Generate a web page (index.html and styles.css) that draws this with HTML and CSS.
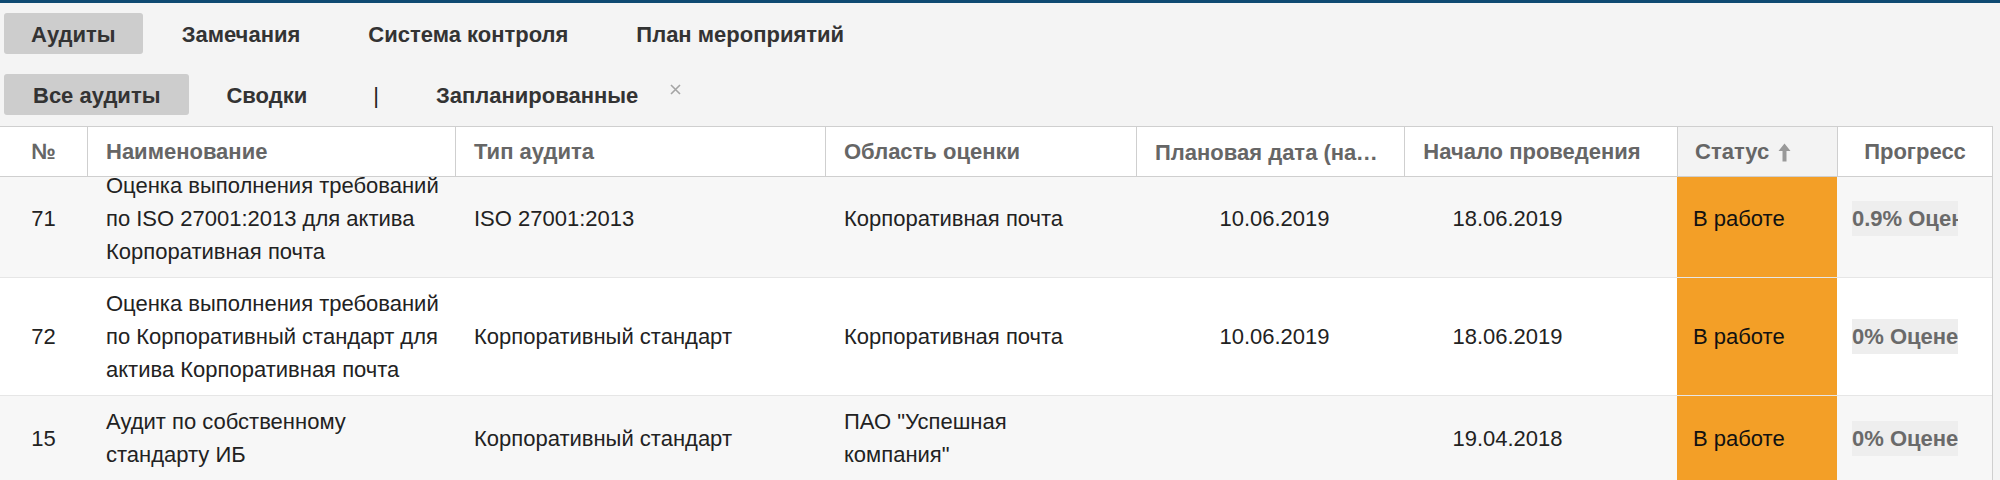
FILE: index.html
```html
<!DOCTYPE html>
<html lang="ru">
<head>
<meta charset="utf-8">
<title>Аудиты</title>
<link rel="stylesheet" href="styles.css">
</head>
<body>
<div class="topbar"></div>
<nav class="tabs tabs-main">
  <span class="tab active">Аудиты</span>
  <span class="tab">Замечания</span>
  <span class="tab">Система контроля</span>
  <span class="tab">План мероприятий</span>
</nav>
<nav class="tabs tabs-sub">
  <span class="tab active">Все аудиты</span>
  <span class="tab">Сводки</span>
  <span class="tab sep">|</span>
  <span class="tab closable">Запланированные<svg class="close" width="11" height="11" viewBox="0 0 11 11"><path d="M1 1 L10 10 M10 1 L1 10" stroke="#a4a4a4" stroke-width="1.6" fill="none"/></svg></span>
</nav>
<div class="table">
  <div class="thead">
    <div class="th th-center">№</div>
    <div class="th">Наименование</div>
    <div class="th">Тип аудита</div>
    <div class="th">Область оценки</div>
    <div class="th th-trunc">Плановая дата (начало)</div>
    <div class="th th-center th-start">Начало проведения</div>
    <div class="th th-sorted">Статус
      <svg class="sort-arrow" width="13" height="19" viewBox="0 0 13 19"><path d="M6.5 0.5 L12.5 8 H8.5 V18.5 H4.5 V8 H0.5 Z" fill="#999"/></svg>
    </div>
    <div class="th th-center">Прогресс</div>
  </div>
  <div class="tbody">
    <div class="rows">
      <div class="tr odd">
        <div class="td td-center">71</div>
        <div class="td td-name">Оценка выполнения требований по ISO 27001:2013 для актива Корпоративная почта</div>
        <div class="td">ISO 27001:2013</div>
        <div class="td td-area">Корпоративная почта</div>
        <div class="td td-date1">10.06.2019</div>
        <div class="td td-date2">18.06.2019</div>
        <div class="td td-status">В работе</div>
        <div class="td td-progress"><span class="progress">0.9% Оценено</span></div>
      </div>
      <div class="tr">
        <div class="td td-center">72</div>
        <div class="td td-name">Оценка выполнения требований по Корпоративный стандарт для актива Корпоративная почта</div>
        <div class="td">Корпоративный стандарт</div>
        <div class="td td-area">Корпоративная почта</div>
        <div class="td td-date1">10.06.2019</div>
        <div class="td td-date2">18.06.2019</div>
        <div class="td td-status">В работе</div>
        <div class="td td-progress"><span class="progress">0% Оценено</span></div>
      </div>
      <div class="tr odd">
        <div class="td td-center">15</div>
        <div class="td td-name">Аудит по собственному стандарту ИБ</div>
        <div class="td">Корпоративный стандарт</div>
        <div class="td td-area">ПАО "Успешная компания"</div>
        <div class="td td-date1"></div>
        <div class="td td-date2">19.04.2018</div>
        <div class="td td-status">В работе</div>
        <div class="td td-progress"><span class="progress">0% Оценено</span></div>
      </div>
      <div class="tr tr-tail">
        <div class="td td-center"></div>
        <div class="td td-name"></div>
        <div class="td"></div>
        <div class="td td-area"></div>
        <div class="td td-date1"></div>
        <div class="td td-date2"></div>
        <div class="td td-status"></div>
        <div class="td td-progress"></div>
      </div>
    </div>
  </div>
</div>
</body>
</html>
```
FILE: styles.css
```css
html, body {
  margin: 0;
  padding: 0;
}
body {
  width: 2000px;
  height: 480px;
  overflow: hidden;
  background: #f4f4f4;
  font-family: "Liberation Sans", Arial, sans-serif;
  color: #222;
}
.topbar {
  height: 3px;
  background: #0f4a72;
}
.tabs {
  display: flex;
  align-items: center;
  gap: 10px;
  padding-left: 4px;
}
.tabs-main {
  margin-top: 10px;
}
.tabs-sub {
  margin-top: 20px;
  gap: 8px;
}
.tab {
  height: 41px;
  padding: 2px 29px 0;
  display: flex;
  align-items: center;
  font-size: 22px;
  font-weight: bold;
  color: #333;
  border-radius: 3px;
  box-sizing: border-box;
  white-space: nowrap;
}
.tab.active {
  background: #cdcdcd;
}
.tabs-main .tab.active {
  padding-left: 27px;
  padding-right: 27px;
}
.tab.sep {
  font-weight: normal;
  color: #222;
  padding-right: 20px;
}
.tab.closable {
  position: relative;
}
.close {
  position: absolute;
  right: -14px;
  top: 10px;
}
.table {
  margin-top: 11px;
  width: 1993px;
}
.thead, .tr {
  display: grid;
  grid-template-columns: 87px 368px 370px 311px 268px 273px 160px 156px;
}
.thead {
  background: #fff;
  border-top: 1px solid #cfcfcf;
  border-bottom: 1px solid #cfcfcf;
  height: 51px;
  box-sizing: border-box;
}
.th {
  display: flex;
  align-items: center;
  padding: 1px 18px 0;
  font-size: 22px;
  font-weight: bold;
  color: #666;
  border-left: 1px solid #cfcfcf;
  white-space: nowrap;
  overflow: hidden;
  min-width: 0;
}
.th:first-child {
  border-left: none;
}
.th:last-child {
  border-right: 1px solid #cfcfcf;
}
.th-center {
  justify-content: center;
  padding-left: 6px;
  padding-right: 6px;
}
.th-start {
  padding-right: 24px;
}
.th-trunc {
  display: block;
  line-height: 49px;
  text-overflow: ellipsis;
  padding-right: 24px;
}
.th-sorted {
  background: #f3f3f3;
  gap: 9px;
  padding-left: 17px;
}
.tbody {
  height: 303px;
  overflow: hidden;
  border-right: 1px solid #cfcfcf;
}
.rows {
  margin-top: -17px;
}
.tr {
  background: #fff;
  border-bottom: 1px solid #e6e6e6;
}
.tr.odd {
  background: #f7f7f7;
}
.td {
  display: flex;
  align-items: center;
  padding: 9px 19px;
  font-size: 22px;
  line-height: 33px;
  min-width: 0;
}
.tr-tail .td {
  min-height: 66px;
}
.td-name {
  padding-right: 6px;
}
.td-area {
  padding-right: 40px;
}
.td-center {
  justify-content: center;
  padding: 9px 8px;
}
.td-date1 {
  justify-content: center;
  padding-left: 9px;
  padding-right: 0;
}
.td-date2 {
  justify-content: center;
  padding-left: 0;
  padding-right: 66px;
}
.td-status {
  background: #f39f27;
  padding-left: 16px;
  color: #111;
}
.td-progress {
  padding-left: 15px;
  padding-right: 0;
}
.progress {
  display: block;
  width: 106px;
  height: 35px;
  line-height: 35px;
  background: #eeeeee;
  color: #6a6a6a;
  font-weight: bold;
  white-space: nowrap;
  overflow: hidden;
}
```
